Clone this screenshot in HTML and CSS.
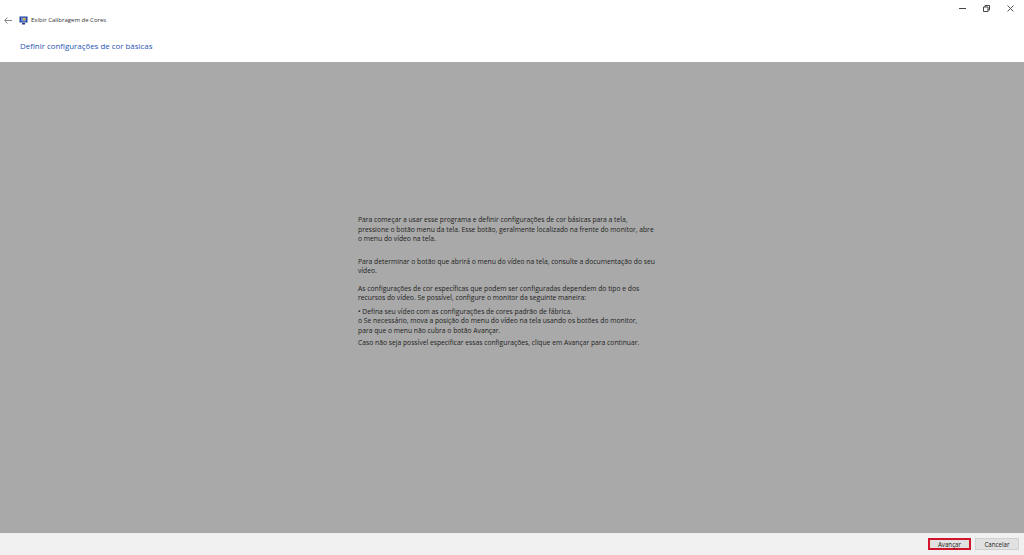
FILE: index.html
```html
<!DOCTYPE html>
<html lang="pt-BR">
<head>
    <meta charset="UTF-8">
    <title>Exibir Calibragem de Cores</title>
    <link rel="stylesheet" href="styles.css">
</head>
<body>
    <div class="window">
        <div class="top">
            <div class="titlebar">
                <svg class="back" width="8" height="7" viewBox="0 0 8 7"><path d="M3.500.5L.7 3.500l2.800 3M1 3.500h7" fill="none" stroke="#777" stroke-width=".9"/></svg>
                <svg class="appicon" width="9" height="9" viewBox="0 0 9 9">
                    <rect x=".5" y=".5" width="8" height="6" fill="#1f3f9e"/>
                    <rect x="2" y="1.500" width="5" height="4" fill="#6f8fd8"/>
                    <rect x="4" y="2" width="2.500" height="2.500" fill="#d8b040"/>
                    <rect x="3" y="7" width="3" height="1.500" fill="#26347a"/>
                </svg>
                <span class="apptitle">Exibir Calibragem de Cores</span>
                <div class="controls">
                    <svg width="7" height="7" viewBox="0 0 7 7"><path d="M0 3.500h7" stroke="#444" stroke-width="1"/></svg>
                    <svg width="7" height="7" viewBox="0 0 7 7"><path d="M.5 2h4.500v4.500h-4.500zM2 2V.5h4.500V5H5" fill="none" stroke="#444" stroke-width="1"/></svg>
                    <svg width="7" height="7" viewBox="0 0 7 7"><path d="M.5.5l6 6M6.500.5l-6 6" stroke="#444" stroke-width=".9"/></svg>
                </div>
            </div>
            <h1>Definir configurações de cor básicas</h1>
        </div>
        <div class="main">
            <div class="text">
                <p class="first">Para começar a usar esse programa e definir configurações de cor básicas para a tela,<br>pressione o botão menu da tela. Esse botão, geralmente localizado na frente do monitor, abre<br>o menu do vídeo na tela.</p>
                <p class="second">Para determinar o botão que abrirá o menu do vídeo na tela, consulte a documentação do seu<br>vídeo.</p>
                <p class="third">As configurações de cor específicas que podem ser configuradas dependem do tipo e dos<br>recursos do vídeo. Se possível, configure o monitor da seguinte maneira:</p>
                <p class="fourth">• Defina seu vídeo com as configurações de cores padrão de fábrica.<br>o Se necessário, mova a posição do menu do vídeo na tela usando os botões do monitor,<br>para que o menu não cubra o botão Avançar.</p>
                <p class="fifth">Caso não seja possível especificar essas configurações, clique em Avançar para continuar.</p>
            </div>
        </div>
        <div class="footer">
            <button class="next">Avançar</button>
            <button>Cancelar</button>
        </div>
    </div>
</body>
</html>
```

FILE: styles.css
```css
html, body {
    margin: 0;
    height: 100%;
}
body {
    font-family: "Open Sans", "Noto Sans", sans-serif;
    background-color: #fff;
    color: #333;
}
.window {
    display: flex;
    flex-direction: column;
    height: 555px;
    overflow: hidden;
}
.top {
    height: 62px;
    background: #fff;
}
.titlebar {
    display: flex;
    align-items: center;
    height: 10px;
    padding: 0 10px 0 4px;
    margin-top: 15px;
}
.back {
    margin-right: 7px;
}
.appicon {
    margin-right: 3px;
}
.apptitle {
    font-size: 6px;
    color: #333;
}
.controls {
    display: flex;
    align-items: center;
    gap: 17px;
    margin-left: auto;
    margin-top: -23px;
}
h1 {
    margin: 13px 0 0 20px;
    font-size: 7.900px;
    line-height: 16px;
    font-weight: 400;
    color: #1f55b5;
}
.main {
    flex: 1;
    background-color: #a9a9a9;
    padding: 153px 0 0 358px;
}
.text {
    width: 310px;
    font-size: 6.760px;
    line-height: 9.500px;
    color: #222;
    white-space: nowrap;
}
.text p {
    margin: 0;
}
.second {
    padding-top: 13px;
}
.third {
    padding-top: 8px;
}
.fourth {
    padding-top: 4px;
}
.fifth {
    padding-top: 3px;
}
.footer {
    display: flex;
    justify-content: flex-end;
    align-items: center;
    gap: 4px;
    height: 22px;
    padding: 0 5px 0 0;
    background: #f0f0f0;
}
button {
    width: 44px;
    height: 12px;
    padding: 0;
    font-family: inherit;
    font-size: 6.200px;
    color: #222;
    background: #e1e1e1;
    border: 1px solid #d0d0d0;
}
.next {
    width: 43px;
    border: 2px solid #d0142c;
}
```
